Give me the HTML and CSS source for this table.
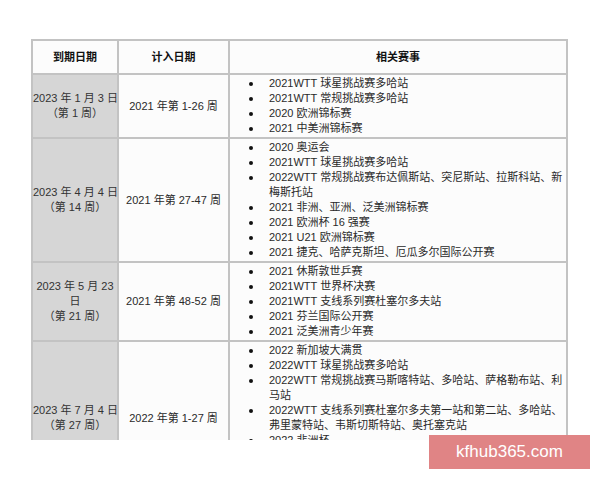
FILE: index.html
```html
<!DOCTYPE html>
<html lang="zh-CN">
<head>
<meta charset="utf-8">
<link rel="stylesheet" href="styles.css">
</head>
<body>
<div class="shot">
  <table class="sched">
    <colgroup>
      <col class="c1"><col class="c2"><col class="c3">
    </colgroup>
    <thead>
      <tr><th>到期日期</th><th>计入日期</th><th>相关赛事</th></tr>
    </thead>
    <tbody>
      <tr>
        <td class="due">2023 年 1 月 3 日<br>（第 1 周）</td>
        <td class="cnt">2021 年第 1-26 周</td>
        <td class="ev"><ul>
          <li>2021WTT 球星挑战赛多哈站</li>
          <li>2021WTT 常规挑战赛多哈站</li>
          <li>2020 欧洲锦标赛</li>
          <li>2021 中美洲锦标赛</li>
        </ul></td>
      </tr>
      <tr>
        <td class="due">2023 年 4 月 4 日<br>（第 14 周）</td>
        <td class="cnt">2021 年第 27-47 周</td>
        <td class="ev"><ul>
          <li>2020 奥运会</li>
          <li>2021WTT 球星挑战赛多哈站</li>
          <li>2022WTT 常规挑战赛布达佩斯站、突尼斯站、拉斯科站、新<br>梅斯托站</li>
          <li>2021 非洲、亚洲、泛美洲锦标赛</li>
          <li>2021 欧洲杯 16 强赛</li>
          <li>2021 U21 欧洲锦标赛</li>
          <li>2021 捷克、哈萨克斯坦、厄瓜多尔国际公开赛</li>
        </ul></td>
      </tr>
      <tr>
        <td class="due">2023 年 5 月 23<br>日<br>（第 21 周）</td>
        <td class="cnt">2021 年第 48-52 周</td>
        <td class="ev"><ul>
          <li>2021 休斯敦世乒赛</li>
          <li>2021WTT 世界杯决赛</li>
          <li>2021WTT 支线系列赛杜塞尔多夫站</li>
          <li>2021 芬兰国际公开赛</li>
          <li>2021 泛美洲青少年赛</li>
        </ul></td>
      </tr>
      <tr>
        <td class="due">2023 年 7 月 4 日<br>（第 27 周）</td>
        <td class="cnt">2022 年第 1-27 周</td>
        <td class="ev last"><ul>
          <li>2022 新加坡大满贯</li>
          <li>2022WTT 球星挑战赛多哈站</li>
          <li>2022WTT 常规挑战赛马斯喀特站、多哈站、萨格勒布站、利<br>马站</li>
          <li>2022WTT 支线系列赛杜塞尔多夫第一站和第二站、多哈站、<br>弗里蒙特站、韦斯切斯特站、奥托塞克站</li>
          <li>2022 非洲杯</li>
        </ul></td>
      </tr>
    </tbody>
  </table>
</div>
<div class="mark">kfhub365.com</div>
</body>
</html>
```
FILE: styles.css
```css
html, body {
  margin: 0;
  padding: 0;
  background: #ffffff;
}
body {
  width: 600px;
  height: 480px;
  position: relative;
  overflow: hidden;
  font-family: "Liberation Sans", "Noto Sans CJK SC", sans-serif;
  font-size: 11px;
  color: #2a2a2a;
}
.shot {
  height: 440px;
  overflow: hidden;
  padding: 39px 0 0 31px;
  box-sizing: border-box;
}
.sched {
  border-collapse: collapse;
  table-layout: fixed;
  width: 535px;
}
.c1 { width: 86px; }
.c2 { width: 111px; }
.c3 { width: 338px; }
.sched th,
.sched td {
  border: 2px solid #c3c3c3;
  background: #fcfcfc;
  line-height: 15px;
}
.sched th {
  height: 32px;
  padding: 0;
  font-weight: bold;
  color: #111;
  text-align: center;
}
.sched td {
  padding: 1px 0;
  vertical-align: middle;
  text-align: center;
  white-space: nowrap;
  overflow: hidden;
}
.sched td.due {
  background: #d6d6d6;
  color: #333;
}
.sched td.ev {
  text-align: left;
  vertical-align: top;
}
.sched td.ev.last {
  padding-bottom: 46px;
}
.ev ul {
  list-style: none;
  margin: 0;
  padding: 0 0 0 19px;
}
.ev li {
  display: flex;
  align-items: flex-start;
}
.ev li::before {
  content: "";
  flex: none;
  width: 4px;
  height: 4px;
  border-radius: 50%;
  background: #111;
  margin: 6px 16px 0 0;
}
.mark {
  position: absolute;
  left: 429px;
  top: 435px;
  width: 161px;
  height: 34px;
  background: #e08485;
  color: #fff;
  font-size: 17px;
  line-height: 34px;
  text-align: center;
}
```
